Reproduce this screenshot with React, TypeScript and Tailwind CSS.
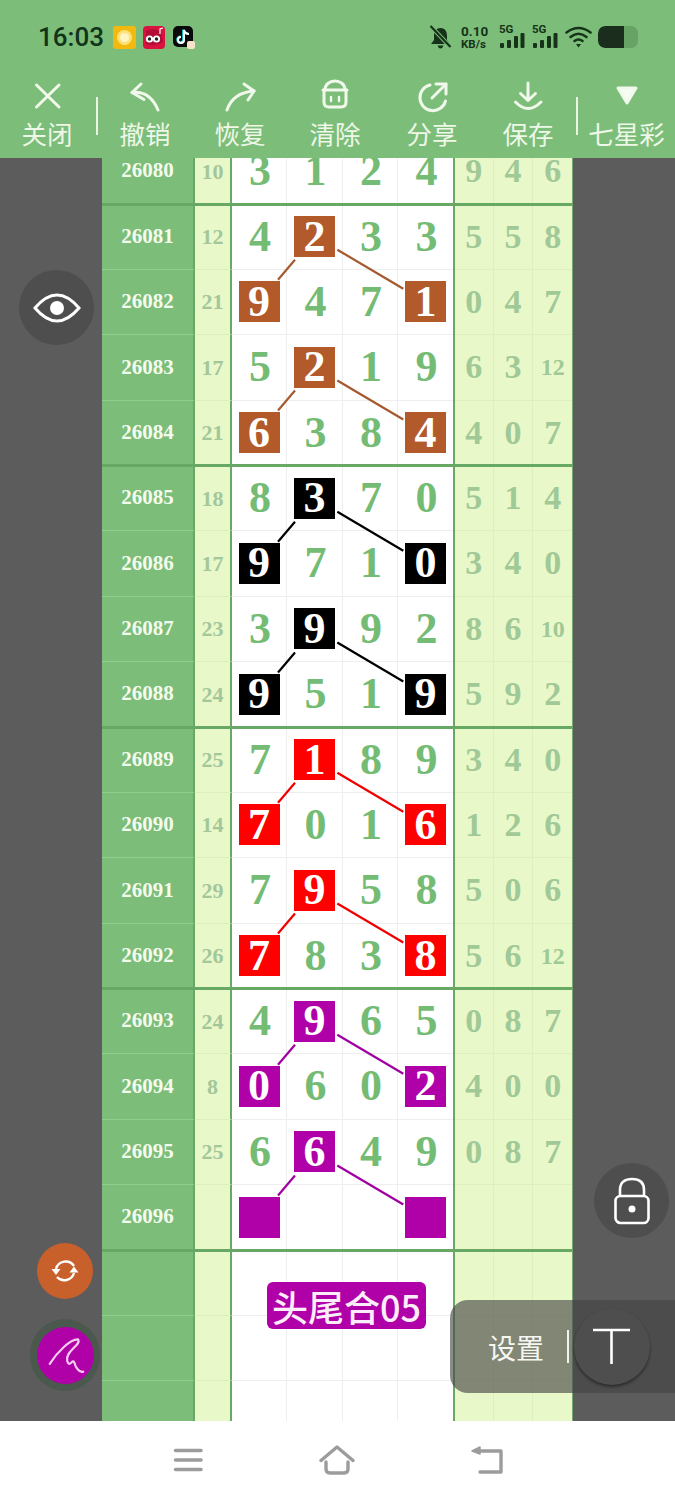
import React from "react";

type Row = { id: string; sum: string; main: string[]; right: string[]; sq: number[] };
type Group = { color: string; line: string; rows: Row[] };

const cjk = "font-['Noto_Sans_CJK_SC','Noto_Sans',sans-serif]";
const serif = "font-['Liberation_Serif',serif]";

const mk = (id: string, sum: string, main: string, right: string[], sq: number[]): Row => ({
  id,
  sum,
  main: main.split(""),
  right,
  sq,
});

const A = [1];
const B = [0, 3];

const firstRow = mk("26080", "10", "3124", ["9", "4", "6"], []);

const groups: Group[] = [
  {
    color: "bg-[#b35a2b]",
    line: "#a5592f",
    rows: [
      mk("26081", "12", "4233", ["5", "5", "8"], A),
      mk("26082", "21", "9471", ["0", "4", "7"], B),
      mk("26083", "17", "5219", ["6", "3", "12"], A),
      mk("26084", "21", "6384", ["4", "0", "7"], B),
    ],
  },
  {
    color: "bg-[#000000]",
    line: "#000000",
    rows: [
      mk("26085", "18", "8370", ["5", "1", "4"], A),
      mk("26086", "17", "9710", ["3", "4", "0"], B),
      mk("26087", "23", "3992", ["8", "6", "10"], A),
      mk("26088", "24", "9519", ["5", "9", "2"], B),
    ],
  },
  {
    color: "bg-[#fe0000]",
    line: "#f00000",
    rows: [
      mk("26089", "25", "7189", ["3", "4", "0"], A),
      mk("26090", "14", "7016", ["1", "2", "6"], B),
      mk("26091", "29", "7958", ["5", "0", "6"], A),
      mk("26092", "26", "7838", ["5", "6", "12"], B),
    ],
  },
  {
    color: "bg-[#b000a8]",
    line: "#a000a0",
    rows: [
      mk("26093", "24", "4965", ["0", "8", "7"], A),
      mk("26094", "8", "0602", ["4", "0", "0"], B),
      mk("26095", "25", "6649", ["0", "8", "7"], A),
      mk("26096", "", "    ", ["", "", ""], B),
    ],
  },
];

const emptyRow = mk("", "", "    ", ["", "", ""], []);

const mainWidths = ["w-[55px]", "w-[56px]", "w-[55px]", "w-[55px]"];
const rightWidths = ["w-[39px]", "w-[40px]", "w-[39px]"];

function TableRow({ row, color }: { row: Row; color?: string }) {
  return (
    <div className={`flex h-[65.375px] ${serif} font-bold`}>
      <div className="flex w-[93px] items-center justify-center border-r-2 border-b border-r-[#68a865] border-b-[#92cf8e] bg-[#7cbe79] text-[21px] text-[#f4fbee]">
        {row.id}
      </div>
      <div className="flex w-[37px] items-center justify-center border-r-2 border-b border-r-[#68a865] border-b-[#dcefbd] bg-[#e9f8c9] text-[22px] text-[#a3c79a]">
        {row.sum}
      </div>
      <div className="flex w-[223px] border-r-2 border-r-[#68a865] bg-white">
        {row.main.map((d, i) => (
          <div
            key={i}
            className={`flex ${mainWidths[i]} items-center justify-center border-b border-b-[#eeeeee] ${i < 3 ? "border-r border-r-[#eeeeee]" : ""} text-[44px] leading-none text-[#74bb74]`}
          >
            {row.sq.includes(i) ? (
              <span className={`flex h-[41px] w-[41px] items-center justify-center ${color} text-white`}>{d}</span>
            ) : (
              <span className="pl-[2px]">{d}</span>
            )}
          </div>
        ))}
      </div>
      <div className="flex w-[118px] border-r border-r-[#77a873] bg-[#e9f8c9]">
        {row.right.map((d, i) => (
          <div
            key={i}
            className={`flex ${rightWidths[i]} items-center justify-center border-b border-b-[#dcefbd] ${i < 2 ? "border-r border-r-[#dcefbd]" : ""} ${d.length > 1 ? "text-[24px]" : "text-[34px]"} leading-none text-[#a0c997]`}
          >
            {d}
          </div>
        ))}
      </div>
    </div>
  );
}

function Divider() {
  return <div className="absolute -bottom-[1.5px] left-0 z-10 h-[3px] w-[471px] bg-[#68a865]" />;
}

function GroupBlock({ g }: { g: Group }) {
  const pairs = [32.7, 163.45];
  return (
    <div className="relative">
      {g.rows.map((r) => (
        <TableRow key={r.id} row={r} color={g.color} />
      ))}
      <svg className="absolute left-[130px] top-0 h-[262px] w-[221px]" viewBox="0 0 221 262">
        {pairs.map((c) => (
          <g key={c} stroke={g.line} strokeWidth="2.2" fill="none">
            <line x1="63" y1={c + 23} x2="46" y2={c + 43} />
            <line x1="105.3" y1={c + 13} x2="171.3" y2={c + 52} />
          </g>
        ))}
      </svg>
      <Divider />
    </div>
  );
}

function Tool({ w, label, vb, children }: { w: string; label: string; vb: string; children: React.ReactNode }) {
  return (
    <div className={`flex ${w} flex-col items-center`}>
      <svg
        className="h-[36px] w-[36px]"
        viewBox={vb}
        fill="none"
        stroke="#f1f8ec"
        strokeWidth="3"
        strokeLinecap="round"
        strokeLinejoin="round"
      >
        {children}
      </svg>
      <span className={`${cjk} whitespace-nowrap text-[25.5px] leading-[38px] text-[#eef7e8]`}>{label}</span>
    </div>
  );
}

function Bars({ left }: { left: string }) {
  return (
    <div className={`relative h-[24px] w-[26px] ${left}`}>
      <span className="absolute -top-[1px] left-0 font-['Roboto',sans-serif] text-[11.5px] font-bold leading-none text-[#16331a]">5G</span>
      <svg className="absolute left-0 top-[8px] h-[16px] w-[26px]" viewBox="0 0 26 16" fill="#16331a">
        <rect x="1" y="10" width="4" height="5" rx="1" />
        <rect x="8" y="7" width="4" height="8" rx="1" />
        <rect x="15" y="3" width="4" height="12" rx="1" />
        <rect x="21.5" y="0" width="4" height="15" rx="1" />
      </svg>
    </div>
  );
}

function StatusBar() {
  return (
    <div className="flex h-[72px] items-center pl-[38px] pr-[37px] pt-[2px]">
      <span className="w-[75px] font-['Roboto',sans-serif] text-[26px] font-medium leading-none text-[#10331a]">16:03</span>
      <svg className="h-[23px] w-[23px]" viewBox="0 0 23 23">
        <rect width="23" height="23" rx="3" fill="#f4b90f" />
        <circle cx="11.5" cy="11.5" r="7.5" fill="#fbe37a" />
        <circle cx="11.5" cy="11.5" r="4.5" fill="#fff4c2" />
      </svg>
      <svg className="ml-[7px] h-[23px] w-[22px]" viewBox="0 0 22 23">
        <rect width="22" height="23" rx="4" fill="#d9123f" />
        <path d="M3 5 Q11 1 18 6 L20 16 Q12 21 3 18 Z" fill="#b30c36" />
        <circle cx="6.5" cy="13" r="3.6" fill="#fff" />
        <circle cx="13.5" cy="13" r="3.6" fill="#fff" />
        <circle cx="6.5" cy="13" r="1.7" fill="#222" />
        <circle cx="13.5" cy="13" r="1.7" fill="#222" />
        <path d="M17 8 V3 L20 2" stroke="#fff" strokeWidth="1.2" fill="none" />
      </svg>
      <svg className="ml-[8px] h-[23px] w-[22px]" viewBox="0 0 22 23">
        <rect width="20" height="21" rx="5" fill="#0a0a0d" />
        <path d="M11 4 V14 A3 3 0 1 1 8 11 M11 4 Q12 8 16 8" stroke="#25e0e0" strokeWidth="2.4" fill="none" transform="translate(-0.6,-0.4)" />
        <path d="M11 4 V14 A3 3 0 1 1 8 11 M11 4 Q12 8 16 8" stroke="#ffffff" strokeWidth="2" fill="none" />
        <rect x="14" y="15" width="8" height="8" rx="2" fill="#f6e3c8" />
      </svg>
      <div className="flex-1" />
      <svg className="h-[24px] w-[23px]" viewBox="0 0 23 24" fill="#16331a">
        <path d="M11.5 3 C6.5 3 5 7 5 11 V15 L2 19 H21 L18 15 V11 C18 7 16.5 3 11.5 3 Z" />
        <path d="M8.5 20.5 H14.5 Q13.5 23.5 11.5 23.5 Q9.5 23.5 8.5 20.5 Z" />
        <line x1="2" y1="1.5" x2="21" y2="21.5" stroke="#7cbe79" strokeWidth="4" />
        <line x1="1.5" y1="1" x2="21.5" y2="22" stroke="#16331a" strokeWidth="2.2" />
      </svg>
      <div className="ml-[9px] flex w-[29px] flex-col font-['Roboto',sans-serif] font-bold leading-none text-[#16331a]">
        <span className="text-[13.5px] leading-[14px]">0.10</span>
        <span className="text-[11.5px] leading-[13px]">KB/s</span>
      </div>
      <Bars left="ml-[9px]" />
      <Bars left="ml-[7px]" />
      <svg className="ml-[7px] h-[22px] w-[27px]" viewBox="0 0 27 22" fill="none" stroke="#16331a" strokeWidth="2.6" strokeLinecap="round">
        <path d="M1.5 6.5 Q13.5 -2.5 25.5 6.5" />
        <path d="M5.5 11 Q13.5 4.5 21.5 11" />
        <path d="M9.5 15 Q13.5 12 17.5 15" />
        <path d="M11 18 H16 L13.5 21.5 Z" fill="#16331a" stroke="none" />
      </svg>
      <div className="ml-[6px] flex h-[22px] w-[40px] overflow-hidden rounded-[7px] bg-[#66a365]">
        <div className="h-full w-[26px] rounded-l-[7px] bg-[#1b2e1e]" />
      </div>
    </div>
  );
}

function Toolbar() {
  return (
    <div className="flex h-[86px] items-start pt-[6px]">
      <Tool w="w-[94px]" label="关闭" vb="29 78 36 36">
        <path d="M36.5 85 L59 107 M59 85 L36.5 107" />
      </Tool>
      <div className="ml-[2px] mt-[19px] h-[38px] w-[2px] bg-[#eaf5e3]" />
      <Tool w="w-[94px]" label="撤销" vb="127 78 36 36">
        <path d="M141 84 L132 92.5 L144 99.5" />
        <path d="M132 92.5 C145 91 153 98 158 110" />
      </Tool>
      <Tool w="w-[96px]" label="恢复" vb="222 78 36 36">
        <path d="M227 110 C231 98 241 92 254 91" />
        <path d="M244 84 L254 91 L248 100" />
      </Tool>
      <Tool w="w-[94px]" label="清除" vb="317 78 36 36">
        <path d="M325 90 C325 84 330 81 335 81 C340 81 345 84 345 90" />
        <path d="M323 90 H347" />
        <path d="M324 90 V102 Q324 107 329 107 H341 Q346 107 346 102 V90" />
        <path d="M331 97 V101 M339 97 V101" strokeWidth="2.4" />
      </Tool>
      <Tool w="w-[100px]" label="分享" vb="414 78 36 36">
        <path d="M430 85 A13 13 0 1 0 445.5 101" />
        <path d="M432 98 L446 84" />
        <path d="M436 84 H446 V94" />
      </Tool>
      <Tool w="w-[92px]" label="保存" vb="510 78 36 36">
        <path d="M528 83 V100" />
        <path d="M520.5 93.5 L528 100.5 L535.5 93.5" />
        <path d="M515.5 102 Q528 115 541 102" />
      </Tool>
      <div className="ml-[2px] mt-[19px] h-[38px] w-[2px] bg-[#eaf5e3]" />
      <Tool w="w-[97px]" label="七星彩" vb="609 78 36 36">
        <path d="M618 88 H636 L627 103 Z" fill="#f6fbf3" />
      </Tool>
    </div>
  );
}

function Floating() {
  return (
    <>
      <div className="absolute left-[19px] top-[112px] flex h-[75px] w-[75px] items-center justify-center rounded-full bg-[#4e4e4e]">
        <svg className="h-[34px] w-[48px]" viewBox="0 0 48 34" fill="none">
          <path d="M2 17 Q24 -9 46 17 Q24 43 2 17 Z" stroke="#fff" strokeWidth="3" />
          <circle cx="24" cy="17" r="7" fill="#fff" />
        </svg>
      </div>

      <div className="absolute left-[594px] top-[1005px] flex h-[75px] w-[75px] items-center justify-center rounded-full bg-[#4e4e4e]">
        <svg className="h-[48px] w-[38px]" viewBox="0 0 38 48" fill="none" stroke="#fff" strokeWidth="2.6">
          <path d="M7 19 V13 C7 5 12 2 19 2 C26 2 31 5 31 13 V19" />
          <rect x="2.5" y="19" width="33" height="27" rx="5" />
          <circle cx="19" cy="32" r="3.5" fill="#fff" stroke="none" />
        </svg>
      </div>

      <div className="absolute left-[37px] top-[1085px] flex h-[56px] w-[56px] items-center justify-center rounded-full bg-[#c8602c]">
        <svg className="h-[32px] w-[32px]" viewBox="0 0 32 32" fill="none" stroke="#fff" strokeWidth="2.4">
          <path d="M7 14 A10 10 0 0 1 25 11" />
          <path d="M25 18 A10 10 0 0 1 8 22" />
          <path d="M2.5 14 H11.5 L7 20 Z" fill="#fff" stroke="none" />
          <path d="M20.5 17.5 H29.5 L25 11.5 Z" fill="#fff" stroke="none" />
        </svg>
      </div>

      <div className="absolute left-[30px] top-[1161px] flex h-[72px] w-[70px] items-center justify-center rounded-full bg-[#4b584e]">
        <div className="flex h-[57px] w-[57px] items-center justify-center rounded-full bg-[#b000a8]">
          <svg className="h-[57px] w-[57px]" viewBox="80 275 170 170" fill="none" stroke="#f6cdf0" strokeWidth="6.5" strokeLinecap="round" strokeLinejoin="round">
            <path d="M118 385 C140 350 180 310 203 312 C212 330 165 345 170 375 C176 400 186 368 191 380 C195 395 205 412 218 408" />
          </svg>
        </div>
      </div>

      <div
        className={`absolute left-[267px] top-[1124px] flex h-[47px] w-[159px] items-center justify-center rounded-[6px] bg-[#b000a8] ${cjk} text-[36px] font-medium leading-none text-[#fbeefa]`}
      >
        头尾合05
      </div>

      <div className="absolute left-[450px] top-[1142px] flex h-[93px] w-[225px] items-center rounded-l-[18px] bg-[rgba(66,66,66,0.62)]">
        <span className={`${cjk} ml-[38px] text-[28px] leading-none text-[#f6f6f2]`}>设置</span>
        <div className="ml-[23px] h-[33px] w-[2px] bg-[#f1f1ee]" />
      </div>
      <div className="absolute left-[574px] top-[1151px] flex h-[76px] w-[76px] items-center justify-center rounded-full bg-[#4e4e4e] shadow-[0_2px_3px_rgba(0,0,0,0.45)]">
        <svg className="h-[40px] w-[40px]" viewBox="0 0 40 40" fill="none" stroke="#fff" strokeWidth="2.6">
          <path d="M1 3 H38 M19.5 3 V37" />
        </svg>
      </div>
    </>
  );
}

function NavBar() {
  return (
    <div className="flex h-[79px] items-center bg-white pb-[2px] pl-[173px]">
      <svg className="h-[26px] w-[30px]" viewBox="0 0 30 26" stroke="#9c9c9c" strokeWidth="3.6" strokeLinecap="round">
        <path d="M2.5 3.5 H28 M2.5 13 H28 M2.5 22.5 H28" />
      </svg>
      <svg className="ml-[115px] h-[30px] w-[38px]" viewBox="0 0 38 30" fill="none" stroke="#9c9c9c" strokeWidth="3.4" strokeLinecap="round" strokeLinejoin="round">
        <path d="M3 15.5 L19 2 L35 15.5" />
        <path d="M8 17 V24 Q8 28 12 28 H26 Q30 28 30 24 V17" />
      </svg>
      <svg className="ml-[114px] h-[30px] w-[34px]" viewBox="0 0 34 30" fill="none" stroke="#9c9c9c" strokeWidth="3.4" strokeLinecap="round" strokeLinejoin="round">
        <path d="M8 6 H31 V27 H10" />
        <path d="M2 6 L10 2 V9 Z" fill="#9c9c9c" strokeWidth="1.5" />
      </svg>
    </div>
  );
}

export default function App() {
  return (
    <div className="flex h-[1500px] w-[675px] flex-col overflow-hidden">
      <div className="flex h-[158px] flex-col bg-[#7cbe79]">
        <StatusBar />
        <Toolbar />
      </div>
      <div className="relative h-[1263px] overflow-hidden bg-[#5c5c5c]">
        <div className="ml-[102px] -mt-[19px] w-[471px]">
          <div className="relative">
            <TableRow row={firstRow} />
            <Divider />
          </div>
          {groups.map((g) => (
            <GroupBlock key={g.line} g={g} />
          ))}
          <TableRow row={emptyRow} />
          <TableRow row={emptyRow} />
          <TableRow row={emptyRow} />
        </div>
        <Floating />
      </div>
      <NavBar />
    </div>
  );
}
